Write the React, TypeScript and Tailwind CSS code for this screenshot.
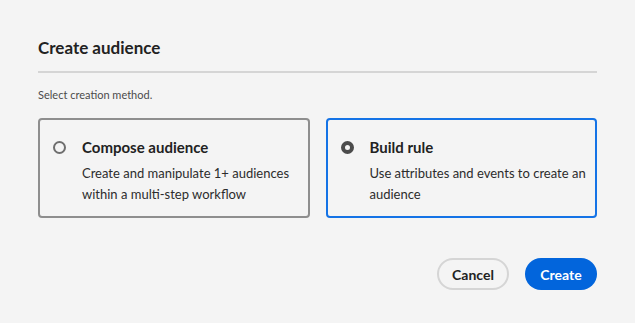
import React, { useState } from 'react';

type Method = 'compose' | 'rule';

const options: { id: Method; title: string; desc: string }[] = [
  { id: 'compose', title: 'Compose audience', desc: 'Create and manipulate 1+ audiences within a multi-step workflow' },
  { id: 'rule', title: 'Build rule', desc: 'Use attributes and events to create an audience' },
];

const App: React.FC = () => {
  const [method, setMethod] = useState<Method>('rule');

  return (
    <div
      className="w-[635px] h-[323px] bg-[#f4f4f4] text-[#222222] px-[38px] pt-[37px]"
      style={{ fontFamily: "Lato, 'Noto Sans', sans-serif" }}
    >
      {/* Header */}
      <h1 className="text-[17px] leading-[22px] font-bold text-[#222222]">Create audience</h1>
      <div className="h-[2px] bg-[#d5d5d5] mt-[12px]" />

      <p className="text-[11px] leading-[14px] text-[#4b4b4b] mt-[15px]">Select creation method.</p>

      {/* Method cards */}
      <div className="grid grid-cols-2 gap-[16px] mt-[16px]">
        {options.map((opt) => {
          const selected = method === opt.id;
          return (
            <button
              key={opt.id}
              onClick={() => setMethod(opt.id)}
              className={`h-[100px] text-left rounded-[4px] border-2 pl-[13px] pr-[4px] pt-[17px] flex items-start gap-[16px] ${
                selected ? 'border-[#1473e6]' : 'border-[#8e8e8e]'
              }`}
            >
              <span className="h-[20px] flex items-center shrink-0">
                <span
                  className={`w-[13px] h-[13px] rounded-full bg-[#f4f4f4] ${
                    selected ? 'border-[4px] border-[#4b4b4b]' : 'border-2 border-[#6e6e6e]'
                  }`}
                />
              </span>
              <span className="flex flex-col">
                <span className="text-[15px] leading-[20px] font-bold text-[#222222]">{opt.title}</span>
                <span className="text-[13px] leading-[21px] text-[#2c2c2c] mt-[6px]">{opt.desc}</span>
              </span>
            </button>
          );
        })}
      </div>

      {/* Footer buttons */}
      <div className="flex justify-end gap-[16px] mt-[40px]">
        <button className="w-[72px] h-[32px] rounded-full border-2 border-[#d5d5d5] text-[14px] font-bold text-[#222222]">
          Cancel
        </button>
        <button className="w-[72px] h-[32px] rounded-full bg-[#0265dc] text-[14px] font-bold text-white">
          Create
        </button>
      </div>
    </div>
  );
};

export default App;
